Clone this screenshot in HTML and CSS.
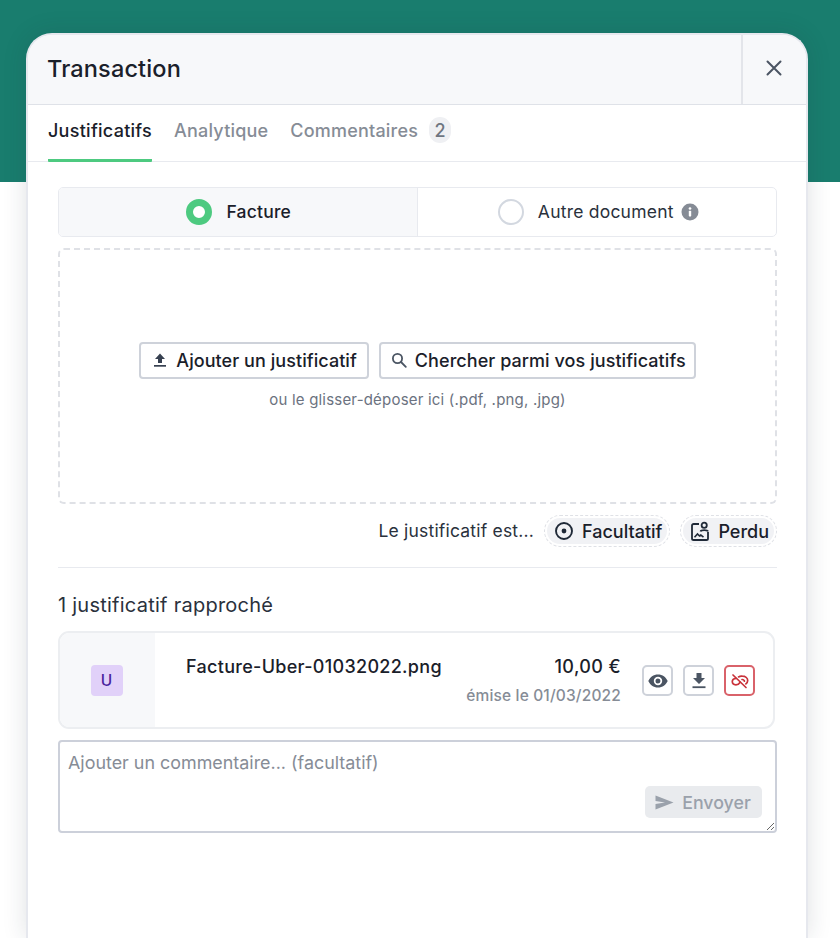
FILE: index.html
```html
<!DOCTYPE html>
<html lang="fr">
<head>
<meta charset="utf-8">
<title>Transaction</title>
<link rel="stylesheet" href="styles.css">
</head>
<body>
<section class="modal">
  <header class="modal-head">
    <h1 class="modal-title">Transaction</h1>
    <button class="close" aria-label="Fermer">
      <svg width="16" height="16" viewBox="0 0 16 16" fill="none" stroke="#4b5563" stroke-width="2" stroke-linecap="round"><path d="M1.5 1.5l13 13M14.5 1.5l-13 13"/></svg>
    </button>
  </header>
  <nav class="tabs">
    <a class="tab active">Justificatifs</a>
    <a class="tab">Analytique</a>
    <a class="tab">Commentaires<span class="count">2</span></a>
  </nav>
  <div class="content">
    <div class="segment">
      <div class="seg-opt on"><span class="radio checked"></span><span>Facture</span></div>
      <div class="seg-opt alt"><span class="radio"></span><span>Autre document</span>
        <svg class="info" width="18" height="18" viewBox="0 0 18 18"><circle cx="9" cy="9" r="8.5" fill="#858b95"/><rect x="7.8" y="7.8" width="2.4" height="5.6" rx=".6" fill="#fff"/><circle cx="9" cy="5.5" r="1.35" fill="#fff"/></svg>
      </div>
    </div>
    <div class="drop">
      <div class="drop-btns">
        <button class="btn btn-add">
          <svg width="16" height="16" viewBox="-1 0 16 16" fill="#374151"><path d="M7 1.5L12 7H9v4H5V7H2z"/><rect x="1" y="13" width="12" height="1.7"/></svg>
          Ajouter un justificatif
        </button>
        <button class="btn">
          <svg width="16" height="16" viewBox="0 0 16 16" fill="none" stroke="#4b5563" stroke-width="1.8" stroke-linecap="round"><circle cx="6.5" cy="6.5" r="4.6"/><path d="M10 10l4.8 4.8"/></svg>
          Chercher parmi vos justificatifs
        </button>
      </div>
      <p class="drop-hint">ou le glisser-déposer ici (.pdf, .png, .jpg)</p>
    </div>
    <div class="status">
      <span class="status-label">Le justificatif est...</span>
      <button class="pill">
        <svg width="20" height="20" viewBox="0 0 20 20" fill="none" stroke="#1f2937" stroke-width="1.9"><circle cx="10" cy="10" r="8"/><circle cx="10" cy="10" r="2.4" fill="#1f2937" stroke="none"/></svg>
        Facultatif
      </button>
      <button class="pill">
        <svg width="20" height="20" viewBox="0 0 20 20" fill="none" stroke="#1f2937" stroke-width="1.8"><path d="M9 3H3.6A1.6 1.6 0 0 0 2 4.6v12.8A1.6 1.6 0 0 0 3.6 19h12.8a1.6 1.6 0 0 0 1.6-1.6V11"/><circle cx="14.2" cy="4.2" r="2.6"/><path d="M10.5 10.5c.6-1.800 6.800-1.800 7.500 0"/><path d="M4.500 16.200l3-3.200 2 2 1.300-1 2.700 2.200" stroke-width="1.600"/></svg>
        Perdu
      </button>
    </div>
    <hr class="rule">
    <h2 class="section-title">1 justificatif rapproché</h2>
    <article class="doc">
      <div class="doc-thumb"><span class="avatar">U</span></div>
      <div class="doc-main">
        <div class="doc-name">Facture-Uber-01032022.png</div>
        <div class="doc-meta">
          <div class="amount">10,00 €</div>
          <div class="date">émise le 01/03/2022</div>
        </div>
        <div class="doc-actions">
          <button class="icon-btn" aria-label="Voir">
            <svg width="20" height="14" viewBox="0 0 20 14"><path fill="#4b5563" fill-rule="evenodd" d="M10 0.500C5.500 0.500 1.900 3.200 0.300 7c1.600 3.800 5.200 6.500 9.700 6.500s8.100-2.700 9.700-6.500C18.100 3.200 14.500 0.500 10 0.500zM10 11.200a4.200 4.200 0 1 1 0-8.400 4.200 4.200 0 0 1 0 8.400zM10 4.500a2.500 2.500 0 1 0 0 5 2.500 2.500 0 0 0 0-5z"/></svg>
          </button>
          <button class="icon-btn" aria-label="Télécharger">
            <svg width="14" height="17" viewBox="0 0 14 17" fill="#4b5563"><path d="M4.500 1h5v5H13l-6 6-6-6h3.500z"/><rect x="0.500" y="14.300" width="13" height="1.800"/></svg>
          </button>
          <button class="icon-btn danger" aria-label="Dissocier">
            <svg width="18" height="16" viewBox="0 0 18 16" fill="none" stroke="#c9323a" stroke-width="1.700" stroke-linecap="round"><path d="M2 2l13 12.500"/><path d="M5 5.300C3 5.500 1.300 6.600 1.300 8.600c0 2 1.700 3.200 3.600 3.200 2 0 3.300-1 4.300-2.600"/><path d="M7.500 3.900c1-.6 2.400-1 3.800-.8 2.900 0 5.400 1.700 5.400 4.500 0 1.500-.8 2.500-1.800 3.300"/><path d="M11 6.500c1.200.2 2.400.6 2.400 1.700"/></svg>
          </button>
        </div>
      </div>
    </article>
    <div class="composer">
      <textarea class="comment" placeholder="Ajouter un commentaire... (facultatif)"></textarea>
      <button class="send">
        <svg width="19" height="15" viewBox="0 0 19 15" fill="#9aa1ab"><path d="M0.500 0.500L18.500 7.500 0.500 14.500 0.500 9 10 7.500 0.500 6z"/></svg>
        Envoyer
      </button>
    </div>
  </div>
</section>
</body>
</html>
```

FILE: styles.css
```css
* { box-sizing: border-box; }
html, body { height: 100%; }
body {
  margin: 0;
  height: 938px;
  overflow: hidden;
  font-family: Inter, "Liberation Sans", sans-serif;
  color: #1a202a;
  background: linear-gradient(#197d6e 0, #197d6e 182px, #fff 182px);
  padding: 33px 32px 0 26px;
}
button { font-family: inherit; color: inherit; cursor: pointer; }

.modal {
  height: 905px;
  background: #fff;
  border: 2px solid #e6e8ee;
  border-bottom: 0;
  border-radius: 26px 26px 0 0;
  box-shadow: 0 0 24px rgba(30, 40, 60, .14);
  overflow: hidden;
}

.modal-head {
  display: flex;
  align-items: stretch;
  justify-content: space-between;
  height: 70px;
  background: #f7f8fa;
  border-bottom: 1px solid #dfe2e8;
}
.modal-title {
  margin: 0;
  padding: 0 0 3px 19px;
  align-self: center;
  font-size: 23.500px;
  font-weight: 500;
  letter-spacing: .15px;
}
.close {
  width: 65px;
  padding: 0 2px 3px 0;
  background: none;
  border: 0;
  border-left: 2px solid #e3e5ea;
  display: flex;
  align-items: center;
  justify-content: center;
}

.tabs {
  display: flex;
  gap: 22px;
  height: 57px;
  padding-left: 20px;
  border-bottom: 1px solid #e8eaef;
}
.tab {
  display: flex;
  align-items: center;
  height: 57px;
  padding-bottom: 7px;
  font-size: 18px;
  font-weight: 500;
  letter-spacing: .2px;
  color: #868c96;
}
.tab.active {
  color: #1a202a;
  border-bottom: 3px solid #4dca80;
  border-radius: 1px;
  padding-bottom: 4px;
  letter-spacing: .27px;
}
.count {
  width: 22px;
  height: 26px;
  margin-left: 11px;
  border-radius: 11px;
  background: #eff0f3;
  color: #6f7681;
  display: flex;
  align-items: center;
  justify-content: center;
}

.content { padding: 25px 29px 0 30px; }

.segment {
  display: flex;
  height: 50px;
  border: 1px solid #e8eaef;
  border-radius: 5px;
  overflow: hidden;
}
.seg-opt {
  flex: 1 1 50%;
  display: flex;
  align-items: center;
  justify-content: center;
  gap: 14px;
  padding-bottom: 1px;
  font-size: 17.500px;
  letter-spacing: .22px;
  color: #2a313c;
}
.seg-opt.on {
  background: #f7f8fa;
  border-right: 1px solid #e8eaef;
  font-weight: 500;
  color: #1a202a;
  padding-left: 2px;
}
.seg-opt.alt { padding-left: 3px; }
.radio {
  width: 26px;
  height: 26px;
  border-radius: 50%;
  border: 2px solid #d3d8e0;
  background: #fff;
}
.radio.checked { border: 7px solid #4dca80; }
.info { margin-left: -7px; }

.drop {
  height: 256px;
  margin-top: 11px;
  border: 2px dashed #dfe1e6;
  border-radius: 6px;
  display: flex;
  flex-direction: column;
  align-items: center;
  justify-content: center;
  padding-bottom: 2px;
}
.drop-btns { display: flex; gap: 10px; }
.btn {
  height: 37px;
  padding: 0 8px 0 10px;
  display: flex;
  align-items: center;
  gap: 8px;
  background: #fff;
  border: 2px solid #ced2da;
  border-radius: 4px;
  font-size: 18px;
  font-weight: 500;
  letter-spacing: .06px;
  color: #1a202a;
  white-space: nowrap;
}
.btn-add { padding: 0 10px 0 11px; }
.drop-hint {
  margin: 12px 0 0;
  font-size: 15px;
  line-height: 18px;
  letter-spacing: .2px;
  color: #6b7280;
}

.status {
  display: flex;
  justify-content: flex-end;
  align-items: center;
  gap: 10px;
  margin-top: 11px;
  font-size: 17.500px;
  letter-spacing: .2px;
  color: #2a313c;
}
.status-label { margin-bottom: 2px; }
.pill {
  height: 32px;
  padding: 0 7px 0 9px;
  display: flex;
  align-items: center;
  gap: 8px;
  background: #f1f2f5;
  background-clip: padding-box;
  border: 1px dashed #dfe1e6;
  border-radius: 16px;
  box-shadow: inset 0 0 0 2px #fff;
  font-size: 18px;
  font-weight: 500;
  letter-spacing: 0;
  color: #1a202a;
}

.rule {
  height: 1px;
  margin: 20px 0 0;
  border: 0;
  background: #e8eaef;
}
.section-title {
  margin: 25px 0 14px;
  font-size: 20px;
  line-height: 24px;
  font-weight: 400;
  letter-spacing: .25px;
  color: #2a313c;
}

.doc {
  display: flex;
  width: 717px;
  height: 98px;
  border: 2px solid #eceef1;
  border-radius: 11px;
  overflow: hidden;
}
.doc-thumb {
  width: 95px;
  padding-right: 2px;
  background: #f7f8fa;
  display: flex;
  align-items: center;
  justify-content: center;
}
.avatar {
  width: 32px;
  height: 31px;
  border-radius: 4px;
  background: #e1d1f9;
  color: #4a1f9e;
  font-size: 15.500px;
  font-weight: 500;
  display: flex;
  align-items: center;
  justify-content: center;
}
.doc-main {
  flex: 1;
  display: flex;
  align-items: flex-start;
  padding: 0 18px 0 31px;
}
.doc-name {
  flex: 1;
  padding-top: 23px;
  font-size: 18px;
  line-height: 22px;
  font-weight: 500;
  letter-spacing: .3px;
}
.doc-meta {
  text-align: right;
  padding-top: 23px;
}
.amount { font-size: 18px; line-height: 22px; font-weight: 500; letter-spacing: .4px; }
.date {
  margin-top: 9px;
  font-size: 15.500px;
  line-height: 18px;
  font-weight: 500;
  letter-spacing: .15px;
  color: #868c96;
}
.doc-actions {
  display: flex;
  gap: 10px;
  margin-left: 21px;
  padding-top: 32px;
}
.icon-btn {
  width: 31px;
  height: 31px;
  padding: 0;
  display: flex;
  align-items: center;
  justify-content: center;
  background: #fff;
  border: 2px solid #ced2da;
  border-radius: 5px;
}
.icon-btn.danger { border-color: #d9626a; }

.composer {
  position: relative;
  height: 93px;
  margin-top: 11px;
}
.comment {
  display: block;
  width: 719px;
  height: 93px;
  padding: 10px 8px;
  border: 2px solid #ccd0da;
  border-radius: 4px;
  background: #fff;
  font-family: inherit;
  font-size: 17.900px;
  line-height: 22px;
  color: #1a202a;
  outline: none;
}
.comment::placeholder { color: #868c96; opacity: 1; }
.send {
  position: absolute;
  right: 15px;
  bottom: 15px;
  width: 117px;
  height: 32px;
  padding: 0 1px 0 0;
  display: flex;
  align-items: center;
  justify-content: center;
  gap: 8px;
  background: #e9ebee;
  border: 0;
  border-radius: 5px;
  font-size: 17.800px;
  font-weight: 500;
  color: #9aa1ab;
}
```
